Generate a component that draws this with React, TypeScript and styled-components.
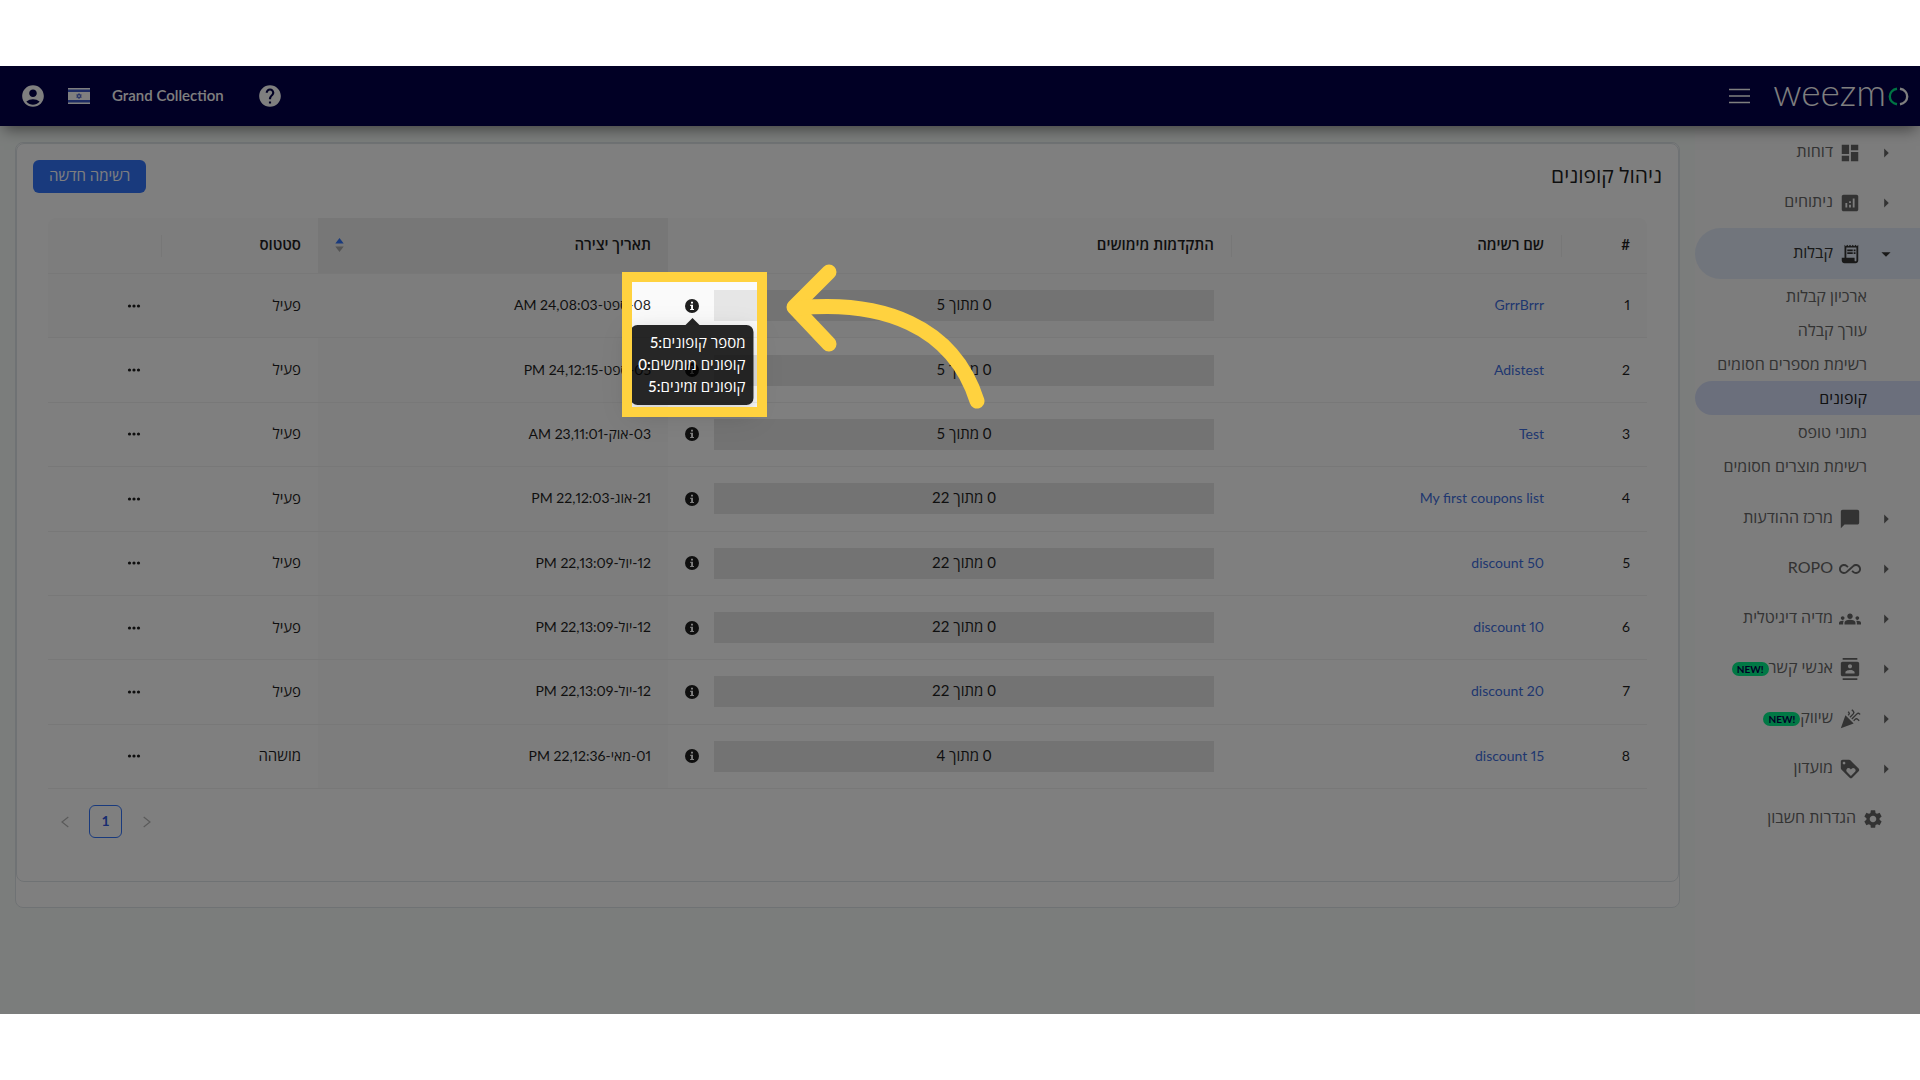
import React from "react";
import styled, { createGlobalStyle } from "styled-components";
import {
  MdAccountCircle,
  MdAllInclusive,
  MdAnalytics,
  MdArrowDropDown,
  MdArrowRight,
  MdCelebration,
  MdChatBubble,
  MdContacts,
  MdDashboard,
  MdGroups,
  MdHelp,
  MdLoyalty,
  MdReceiptLong,
  MdSettings,
} from "react-icons/md";
import type { IconType } from "react-icons";

const GlobalStyle = createGlobalStyle`
  *, *::before, *::after { box-sizing: border-box; }
  body {
    margin: 0;
    background: #fff;
    color: #1f1f1f;
    font-family: Lato, "Open Sans", "Liberation Sans", sans-serif;
    font-size: 14px;
  }
  button {
    font: inherit;
    color: inherit;
    background: none;
    border: 0;
    padding: 0;
    cursor: pointer;
  }
  a { color: inherit; text-decoration: none; }
  ul { list-style: none; margin: 0; padding: 0; }
`;

const Page = styled.div`
  display: flex;
  flex-direction: column;
  min-height: 100vh;
  padding: 66px 0;
`;

const Frame = styled.div`
  position: relative;
  display: flex;
  flex-direction: column;
  flex: 1;
  overflow: hidden;
  background: #f6fbf8;
`;

/* ---------- top bar ---------- */

const TopBar = styled.header`
  position: relative;
  z-index: 1;
  display: flex;
  align-items: center;
  justify-content: space-between;
  height: 60px;
  padding: 0 11px 0 20px;
  background: #03004a;
  color: #fff;
  box-shadow: 0 7px 14px -4px rgba(0, 0, 0, 0.5);
`;

const BarGroup = styled.div<{ $gap: number }>`
  display: flex;
  align-items: center;
  gap: ${(p) => p.$gap}px;
`;

const BarButton = styled.button`
  display: flex;
  font-size: 26px;
`;

const AccountName = styled.span`
  margin-right: 11px;
  padding-bottom: 2px;
  font-size: 15px;
  font-weight: 600;
`;

const Logo = styled.a`
  display: flex;
  align-items: center;
  gap: 2px;
  font-size: 37px;
  font-weight: 300;
  line-height: 40px;
`;

const LogoText = styled.span`
  padding-bottom: 9px;
`;

/* ---------- body ---------- */

const Body = styled.div`
  display: flex;
  flex: 1;
`;

const Sidebar = styled.nav`
  width: 225px;
  flex: none;
  padding-top: 2px;
  background: #fafafa;
  color: #666;
  font-size: 16px;
`;

const SideLink = styled.a<{ $active?: boolean; $inset: number }>`
  display: flex;
  align-items: center;
  height: ${(p) => (p.$active ? 51 : 50)}px;
  padding-right: ${(p) => p.$inset}px;
  border-radius: 26px 0 0 26px;
  background: ${(p) => (p.$active ? "#e2ebf8" : "transparent")};
  color: ${(p) => (p.$active ? "#333" : "inherit")};
`;

const SideArrow = styled.span`
  display: flex;
  margin-left: 14px;
  font-size: 22px;
`;

const SideIcon = styled.span`
  display: flex;
  margin-left: 6px;
  font-size: 22px;
`;

const SideText = styled.span`
  padding-bottom: 4px;
  line-height: 22px;
`;

const NewBadge = styled.span`
  height: 14px;
  padding: 0 5px;
  border-radius: 7px;
  background: #00f08a;
  color: #03004a;
  font-size: 10px;
  font-weight: 700;
  line-height: 14px;
`;

const SubList = styled.ul`
  padding-bottom: 11px;
`;

const SubLink = styled.a<{ $active?: boolean }>`
  display: block;
  height: 34px;
  padding-right: 53px;
  border-radius: 17px 0 0 17px;
  background: ${(p) => (p.$active ? "#d6dff8" : "transparent")};
  color: ${(p) => (p.$active ? "#222" : "inherit")};
  line-height: 33px;
`;

const Main = styled.main`
  flex: 1;
  min-width: 0;
  padding: 16px 15px;
`;

const OuterCard = styled.div`
  padding-bottom: 25px;
  border: 1px solid #dfe5e8;
  border-radius: 8px;
  background: #fff;
`;

const Card = styled.section`
  padding: 16px 16px 43px;
  border: 1px solid #dfe5e8;
  border-radius: 8px;
  background: #fff;
`;

const CardHead = styled.div`
  display: flex;
  align-items: center;
  justify-content: space-between;
  margin-bottom: 25px;
`;

const Title = styled.h1`
  margin: 0;
  padding-bottom: 4px;
  font-size: 21px;
  font-weight: 400;
  line-height: 28px;
`;

const PrimaryButton = styled.button`
  height: 33px;
  padding: 0 16px 4px;
  border-radius: 6px;
  background: #3375fb;
  color: #fff;
  font-size: 15px;
`;

const TableArea = styled.div`
  padding: 0 15px;
`;

const Table = styled.table`
  width: 100%;
  height: 571px;
  table-layout: fixed;
  border-collapse: separate;
  border-spacing: 0;
`;

const HeadCell = styled.th<{ $sorted?: boolean; $divider?: boolean }>`
  position: relative;
  height: 56px;
  padding: 0 17px 4px;
  background: ${(p) => (p.$sorted ? "#efefef" : "#fafafa")};
  border-bottom: 1px solid #f0f0f0;
  font-size: 15px;
  font-weight: 600;
  text-align: right;
  &:first-child { border-top-right-radius: 8px; }
  &:last-child { border-top-left-radius: 8px; }
  &::after {
    content: "";
    display: ${(p) => (p.$divider ? "block" : "none")};
    position: absolute;
    left: 0;
    top: 17px;
    width: 1px;
    height: 22px;
    background: #eee;
  }
`;

const SortHead = styled.div`
  display: flex;
  align-items: center;
  justify-content: space-between;
`;

const SortButton = styled.button`
  display: flex;
  padding-top: 2px;
`;

const Row = styled.tr<{ $hover: boolean }>`
  background: ${(p) => (p.$hover ? "#fafafa" : "#fff")};
`;

const Cell = styled.td<{ $sorted?: boolean; $text?: boolean }>`
  padding: 0 17px ${(p) => (p.$text ? 2 : 0)}px;
  border-bottom: 1px solid #f0f0f0;
  background: ${(p) => (p.$sorted ? "#fafafa" : "transparent")};
  font-variant-numeric: ${(p) => (p.$text ? "proportional-nums" : "normal")};
  text-align: right;
`;

const NameLink = styled.a`
  color: #3f6fe0;
`;

const StatusText = styled.span`
  font-size: 15px;
`;

const ProgressLine = styled.div`
  display: flex;
  align-items: center;
  gap: 15px;
`;

const Bar = styled.div`
  flex: 1;
  height: 31px;
  background: #e6e6e6;
  font-size: 15px;
  line-height: 29px;
  text-align: center;
`;

const InfoAnchor = styled.div`
  position: relative;
  display: flex;
`;

const InfoButton = styled.button`
  display: flex;
`;

const MoreButton = styled.button`
  display: flex;
  margin-right: 3px;
`;

const Tooltip = styled.div`
  position: absolute;
  z-index: 5;
  top: 26px;
  left: 50%;
  width: 123px;
  transform: translateX(-50%);
  padding: 6px 8px 8px;
  border-radius: 7px;
  background: rgba(0, 0, 0, 0.85);
  box-shadow: 0 6px 16px rgba(0, 0, 0, 0.12), 0 9px 28px 8px rgba(0, 0, 0, 0.06);
  color: #fff;
  line-height: 22px;
  font-size: 15px;
  font-weight: 500;
  white-space: nowrap;
  &::before {
    content: "";
    position: absolute;
    bottom: 100%;
    left: 50%;
    margin-left: -7px;
    border: 7px solid transparent;
    border-top-width: 0;
    border-bottom-color: rgba(0, 0, 0, 0.85);
  }
`;

/* Dims everything around the framed square. */
const Spotlight = styled.div`
  position: absolute;
  z-index: 10;
  top: -27px;
  left: -63px;
  width: 145px;
  height: 145px;
  border: 10px solid #ffd23f;
  box-shadow: 0 0 0 9999px rgba(0, 0, 0, 0.5);
  pointer-events: none;
`;

const PointerArrow = styled.svg`
  position: absolute;
  z-index: 11;
  top: -35px;
  left: 101px;
  pointer-events: none;
`;

const Pagination = styled.nav`
  display: flex;
  justify-content: flex-end;
  gap: 8px;
  padding-top: 16px;
`;

const PageButton = styled.button<{ $current?: boolean }>`
  display: flex;
  align-items: center;
  justify-content: center;
  width: 33px;
  height: 33px;
  padding-bottom: ${(p) => (p.$current ? 2 : 0)}px;
  border: 1px solid ${(p) => (p.$current ? "#3375fb" : "transparent")};
  border-radius: 6px;
  color: ${(p) => (p.$current ? "#3059e0" : "#b5b5b5")};
  font-weight: 700;
`;

/* ---------- drawings ---------- */

const Flag = () => (
  <svg width="22" height="16" viewBox="0 0 22 16" role="img" aria-label="עברית">
    <rect width="22" height="16" fill="#fff" />
    <rect y="1.5" width="22" height="2.5" fill="#3a56c8" />
    <rect y="12" width="22" height="2.5" fill="#3a56c8" />
    <path d="M11 5.5l2.3 3.8H8.7zM11 10.7L8.7 6.8h4.6z" fill="none" stroke="#3a56c8" strokeWidth="0.8" />
  </svg>
);

const MenuLines = () => (
  <svg width="21" height="16" viewBox="0 0 21 16" stroke="#fff" strokeWidth="1.6">
    <path d="M0 1.5h21M0 8h21M0 14.5h21" />
  </svg>
);

const LogoRing = () => (
  <svg width="21" height="19" viewBox="0 0 21 19" fill="none" strokeWidth="2.4">
    <path d="M9 1.8C4.6 2.6 1.8 5.7 1.8 9.5S4.6 16.4 9 17.2" stroke="#00e887" />
    <path d="M12 1.8C16.4 2.6 19.2 5.7 19.2 9.5S16.4 16.4 12 17.2" stroke="#fff" />
  </svg>
);

const InfoIcon = () => (
  <svg width="14" height="14" viewBox="0 0 14 14">
    <circle cx="7" cy="7" r="7" fill="#1f1f1f" />
    <path d="M6 2.8h2v1.8H6zM5.2 5.7H8v4.2h1v1.2H5.1V9.9h1V6.9h-.9z" fill="#fff" />
  </svg>
);

const MoreIcon = () => (
  <svg width="14" height="14" viewBox="0 0 14 14" fill="#1f1f1f">
    <circle cx="2.5" cy="7" r="1.6" />
    <circle cx="7" cy="7" r="1.6" />
    <circle cx="11.5" cy="7" r="1.6" />
  </svg>
);

const SortIcon = () => (
  <svg width="9" height="14" viewBox="0 0 9 14">
    <path d="M4.5 0L8.7 5.5H.3z" fill="#3375fb" />
    <path d="M4.5 14L8.7 8.5H.3z" fill="#a8a8a8" />
  </svg>
);

const Chevron = ({ flip }: { flip?: boolean }) => (
  <svg width="8" height="12" viewBox="0 0 8 12" fill="none" stroke="currentColor" strokeWidth="1.2">
    <path d={flip ? "M7.3 1L1 6l6.3 5" : "M.7 1L7 6l-6.3 5"} />
  </svg>
);

/* ---------- data ---------- */

type Section = {
  icon: IconType;
  label: string;
  isNew?: boolean;
  plain?: boolean;
  children?: string[];
};

const sections: Section[] = [
  { icon: MdDashboard, label: "דוחות" },
  { icon: MdAnalytics, label: "ניתוחים" },
  {
    icon: MdReceiptLong,
    label: "קבלות",
    children: [
      "ארכיון קבלות",
      "עורך קבלה",
      "רשימת מספרים חסומים",
      "קופונים",
      "נתוני טופס",
      "רשימת מוצרים חסומים",
    ],
  },
  { icon: MdChatBubble, label: "מרכז ההודעות" },
  { icon: MdAllInclusive, label: "ROPO" },
  { icon: MdGroups, label: "מדיה דיגיטלית" },
  { icon: MdContacts, label: "אנשי קשר", isNew: true },
  { icon: MdCelebration, label: "שיווק", isNew: true },
  { icon: MdLoyalty, label: "מועדון" },
  { icon: MdSettings, label: "הגדרות חשבון", plain: true },
];

const currentPage = "קופונים";

const coupons = [
  { name: "GrrrBrrr", total: 5, date: "08-ספט-24,08:03 AM", status: "פעיל" },
  { name: "Adistest", total: 5, date: "05-ספט-24,12:15 PM", status: "פעיל" },
  { name: "Test", total: 5, date: "03-אוק-23,11:01 AM", status: "פעיל" },
  { name: "My first coupons list", total: 22, date: "21-אוג-22,12:03 PM", status: "פעיל" },
  { name: "discount 50", total: 22, date: "12-יול-22,13:09 PM", status: "פעיל" },
  { name: "discount 10", total: 22, date: "12-יול-22,13:09 PM", status: "פעיל" },
  { name: "discount 20", total: 22, date: "12-יול-22,13:09 PM", status: "פעיל" },
  { name: "discount 15", total: 4, date: "01-מאי-22,12:36 PM", status: "מושהה" },
];

const SideSection = ({ section }: { section: Section }) => {
  const Icon = section.icon;
  const open = Boolean(section.children);
  return (
    <li>
      <SideLink href="#" $active={open} $inset={section.plain ? 36 : 23}>
        {!section.plain && <SideArrow>{open ? <MdArrowDropDown /> : <MdArrowRight />}</SideArrow>}
        <SideIcon>
          <Icon />
        </SideIcon>
        <SideText>{section.label}</SideText>
        {section.isNew && <NewBadge dir="ltr">NEW!</NewBadge>}
      </SideLink>
      {section.children && (
        <SubList>
          {section.children.map((label) => (
            <li key={label}>
              <SubLink href="#" $active={label === currentPage}>
                {label}
              </SubLink>
            </li>
          ))}
        </SubList>
      )}
    </li>
  );
};

export default function App() {
  return (
    <Page dir="rtl">
      <GlobalStyle />
      <Frame>
        <TopBar>
          <BarGroup $gap={23}>
            <Logo href="#" dir="ltr" aria-label="weezmo">
              <LogoText>weezm</LogoText>
              <LogoRing />
            </Logo>
            <BarButton aria-label="תפריט">
              <MenuLines />
            </BarButton>
          </BarGroup>
          <BarGroup $gap={22} dir="ltr">
            <BarButton aria-label="חשבון">
              <MdAccountCircle />
            </BarButton>
            <BarButton aria-label="שפה">
              <Flag />
            </BarButton>
            <AccountName>Grand Collection</AccountName>
            <BarButton aria-label="עזרה">
              <MdHelp />
            </BarButton>
          </BarGroup>
        </TopBar>
        <Body>
          <Sidebar>
            <ul>
              {sections.map((section) => (
                <SideSection key={section.label} section={section} />
              ))}
            </ul>
          </Sidebar>
          <Main>
            <OuterCard>
              <Card>
                <CardHead>
                  <Title>ניהול קופונים</Title>
                  <PrimaryButton>רשימה חדשה</PrimaryButton>
                </CardHead>
                <TableArea>
                  <Table>
                    <colgroup>
                      <col width="86" />
                      <col width="330" />
                      <col width="563" />
                      <col width="350" />
                      <col width="157" />
                      <col width="113" />
                    </colgroup>
                    <thead>
                      <tr>
                        <HeadCell $divider>#</HeadCell>
                        <HeadCell $divider>שם רשימה</HeadCell>
                        <HeadCell>התקדמות מימושים</HeadCell>
                        <HeadCell $sorted>
                          <SortHead>
                            תאריך יצירה
                            <SortButton aria-label="מיון">
                              <SortIcon />
                            </SortButton>
                          </SortHead>
                        </HeadCell>
                        <HeadCell $divider>סטטוס</HeadCell>
                        <HeadCell aria-label="פעולות" />
                      </tr>
                    </thead>
                    <tbody>
                      {coupons.map((coupon, index) => (
                        <Row key={index} $hover={index === 0}>
                          <Cell $text>{index + 1}</Cell>
                          <Cell $text>
                            <NameLink href="#">{coupon.name}</NameLink>
                          </Cell>
                          <Cell>
                            <ProgressLine>
                              <Bar>0 מתוך {coupon.total}</Bar>
                              <InfoAnchor>
                                <InfoButton aria-label="מידע">
                                  <InfoIcon />
                                </InfoButton>
                                {index === 0 && (
                                  <>
                                    <Tooltip role="tooltip">
                                      <div>מספר קופונים:5</div>
                                      <div>קופונים מומשים:0</div>
                                      <div>קופונים זמינים:5</div>
                                    </Tooltip>
                                    <Spotlight />
                                    <PointerArrow
                                      width="200"
                                      height="146"
                                      viewBox="0 0 200 146"
                                      fill="none"
                                      stroke="#ffd23f"
                                      strokeWidth="15"
                                      strokeLinecap="round"
                                      strokeLinejoin="round"
                                    >
                                      <path d="M43 8L8 43l35 37" />
                                      <path d="M12 44C95 36 167 61 191 137" />
                                    </PointerArrow>
                                  </>
                                )}
                              </InfoAnchor>
                            </ProgressLine>
                          </Cell>
                          <Cell $sorted $text>
                            {coupon.date}
                          </Cell>
                          <Cell $text>
                            <StatusText>{coupon.status}</StatusText>
                          </Cell>
                          <Cell>
                            <MoreButton aria-label="פעולות נוספות">
                              <MoreIcon />
                            </MoreButton>
                          </Cell>
                        </Row>
                      ))}
                    </tbody>
                  </Table>
                  <Pagination aria-label="עמודים">
                    <PageButton aria-label="הקודם">
                      <Chevron />
                    </PageButton>
                    <PageButton $current>1</PageButton>
                    <PageButton aria-label="הבא">
                      <Chevron flip />
                    </PageButton>
                  </Pagination>
                </TableArea>
              </Card>
            </OuterCard>
          </Main>
        </Body>
      </Frame>
    </Page>
  );
}
